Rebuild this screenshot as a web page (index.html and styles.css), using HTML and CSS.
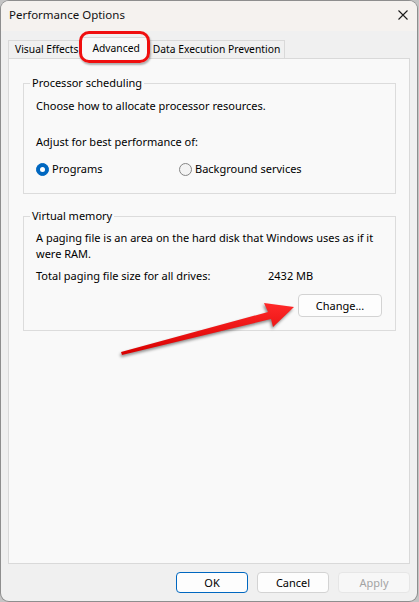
FILE: index.html
```html
<!DOCTYPE html>
<html>
<head>
<meta charset="utf-8">
<link rel="stylesheet" href="styles.css">
</head>
<body>
<div class="window">
  <div class="titlebar">
    <span class="title">Performance Options</span>
    <svg class="close" width="10" height="10" viewBox="0 0 10 10"><path d="M0.5 0.5 L9.5 9.5 M9.5 0.5 L0.5 9.5" stroke="#1a1a1a" stroke-width="1.1" fill="none"/></svg>
  </div>
  <div class="content">
    <div class="tabs">
      <div class="tab first">Visual Effects</div>
      <div class="tab active">Advanced</div>
      <div class="tab last">Data Execution Prevention</div>
    </div>
    <div class="panel">
      <fieldset class="group g1">
        <legend>Processor scheduling</legend>
        <p>Choose how to allocate processor resources.</p>
        <p class="adjust">Adjust for best performance of:</p>
        <div class="radios">
          <label class="radio r1"><span class="dot on"></span>Programs</label>
          <label class="radio"><span class="dot"></span>Background services</label>
        </div>
      </fieldset>
      <fieldset class="group g2">
        <legend>Virtual memory</legend>
        <p class="nowrap">A paging file is an area on the hard disk that Windows uses as if it<br>were RAM.</p>
        <div class="total"><span class="lbl">Total paging file size for all drives:</span><span>2432 MB</span></div>
        <div class="change-row"><button class="btn change">Change...</button></div>
      </fieldset>
    </div>
    <div class="footer">
      <button class="btn fbtn ok">OK</button>
      <button class="btn fbtn">Cancel</button>
      <button class="btn fbtn disabled">Apply</button>
    </div>
  </div>
  <div class="highlight"></div>
  <svg class="arrow" width="419" height="602" viewBox="0 0 419 602">
    <defs>
      <linearGradient id="ag" x1="0" y1="0" x2="0" y2="1">
        <stop offset="0" stop-color="#ff2a2a"/>
        <stop offset="1" stop-color="#d80000"/>
      </linearGradient>
    </defs>
    <polygon class="arrow-shape" points="121,352 268,312 264,303 294,307 273,327 271,319 122,355" fill="url(#ag)"/>
  </svg>
</div>
</body>
</html>
```
FILE: styles.css
```css
html, body {
  margin: 0;
  padding: 0;
}
body {
  background: #c4c4c4;
  font-family: "Noto Sans", "Open Sans", sans-serif;
  font-size: 11px;
  line-height: 16px;
  color: #000;
  width: 419px;
  height: 602px;
  overflow: hidden;
}
.window {
  position: relative;
  margin: 1px 0 0 1px;
  width: 416px;
  height: 600px;
  background: #f0f0f0;
  border-radius: 8px;
  box-shadow: 0 0 0 1px #8e8e8e;
  display: flex;
  flex-direction: column;
}
.titlebar {
  height: 30px;
  box-sizing: border-box;
  padding: 0 9px 2px 8px;
  background: #f5f2ef;
  border-radius: 8px 8px 0 0;
  display: flex;
  align-items: center;
  justify-content: space-between;
}
.title {
  font-size: 11.5px;
  color: #111;
}
.close {
  display: block;
}
.content {
  flex: 1;
  display: flex;
  flex-direction: column;
  padding: 6px 7px 8px 7px;
  min-height: 0;
}
.tabs {
  display: flex;
  align-items: flex-end;
  height: 22px;
  margin-bottom: -1px;
  position: relative;
  z-index: 1;
}
.tab {
  box-sizing: border-box;
  height: 18px;
  line-height: 16px;
  font-size: 10.3px;
  margin-bottom: 1px;
  border: 1px solid #d9d9d9;
  border-bottom: none;
  background: #f0f0f0;
  white-space: nowrap;
}
.tab.first {
  padding: 0 3px 0 6px;
}
.tab.last {
  padding: 0 4px 0 3px;
}
.tab.active {
  height: 22px;
  line-height: 20px;
  margin: 0 -1px 0 -1px;
  padding: 0 9px 0 10px;
  background: #f9f9f9;
  position: relative;
  z-index: 2;
}
.panel {
  flex: 1;
  background: #f9f9f9;
  border: 1px solid #d9d9d9;
  padding: 16px 13px 0 14px;
}
.group {
  margin: 0;
  border: 1px solid #dcdcdc;
  padding: 7px 13px 16px 12px;
  min-width: 0;
}
.group legend {
  padding: 0 2px;
  margin-left: -6px;
  line-height: 16px;
}
.g2 {
  margin-top: 14px;
  padding-top: 6px;
  padding-bottom: 13px;
}
.group p {
  margin: 0;
}
.nowrap {
  white-space: nowrap;
}
.adjust {
  margin-top: 20px !important;
}
.radios {
  display: flex;
  margin-top: 11px;
}
.radio {
  display: flex;
  align-items: center;
  gap: 3px;
}
.r1 {
  width: 143px;
}
.dot {
  box-sizing: border-box;
  width: 13px;
  height: 13px;
  border-radius: 50%;
  border: 1px solid #858585;
  background: #f3f3f3;
  position: relative;
}
.dot.on {
  background: #0067c0;
  border-color: #0067c0;
}
.dot.on::after {
  content: "";
  position: absolute;
  left: 3px;
  top: 3px;
  width: 5px;
  height: 5px;
  border-radius: 50%;
  background: #fff;
}
.total {
  display: flex;
  margin-top: 6px;
}
.lbl {
  width: 232px;
}
.change-row {
  display: flex;
  justify-content: flex-end;
  margin-top: 10px;
}
.btn {
  font-family: inherit;
  font-size: 11px;
  color: #000;
  background: #fdfdfd;
  border: 1px solid #d3d3d3;
  border-radius: 4px;
  padding: 0;
  box-sizing: border-box;
}
.change {
  width: 84px;
  height: 23px;
}
.footer {
  display: flex;
  justify-content: flex-end;
  gap: 9px;
  margin-top: 8px;
}
.fbtn {
  width: 72px;
  height: 21px;
}
.ok {
  border-color: #0067c0;
}
.disabled {
  color: #a3a3a3;
  background: #f7f7f7;
  border-color: #e6e6e6;
}
.highlight {
  position: absolute;
  left: 78px;
  top: 30px;
  width: 71px;
  height: 32px;
  box-sizing: border-box;
  border: 3.5px solid #f00f0f;
  border-radius: 10px;
  box-shadow: 1px 2px 2px rgba(0, 0, 0, 0.3);
  z-index: 5;
}
.arrow {
  position: absolute;
  left: -1px;
  top: -1px;
  z-index: 5;
  pointer-events: none;
}
.arrow-shape {
  filter: drop-shadow(-1px 2px 1.5px rgba(0, 0, 0, 0.45));
}
```
